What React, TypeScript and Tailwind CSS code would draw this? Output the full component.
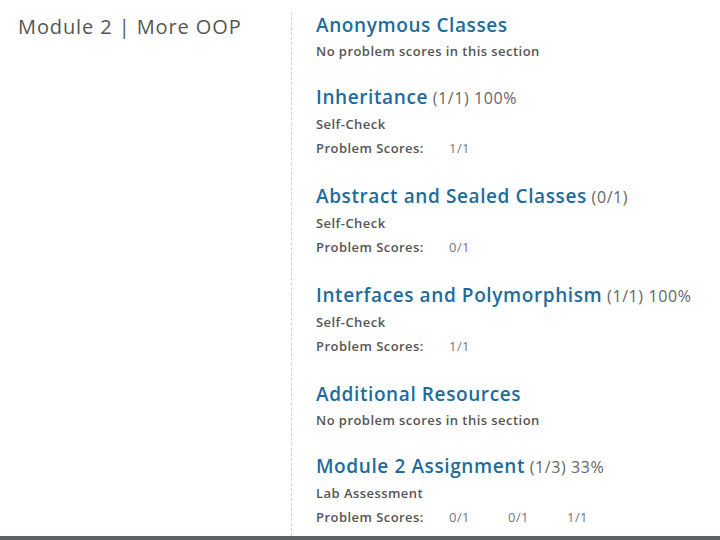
const sections: {
    title: string;
    score?: string;
    kind?: string;
    scores?: string[];
}[] = [
    { title: 'Anonymous Classes' },
    { title: 'Inheritance', score: '(1/1) 100%', kind: 'Self-Check', scores: ['1/1'] },
    { title: 'Abstract and Sealed Classes', score: '(0/1)', kind: 'Self-Check', scores: ['0/1'] },
    { title: 'Interfaces and Polymorphism', score: '(1/1) 100%', kind: 'Self-Check', scores: ['1/1'] },
    { title: 'Additional Resources' },
    { title: 'Module 2 Assignment', score: '(1/3) 33%', kind: 'Lab Assessment', scores: ['0/1', '0/1', '1/1'] },
];

export default function App() {
    return (
        <div className="w-[720px] h-[540px] bg-white flex flex-col overflow-hidden font-['Open_Sans',sans-serif]">
            <div className="flex flex-1 min-h-0">
                <div className="w-[291px] pl-[18px] pt-[13px]">
                    <h1 className="text-[20px] leading-[28px] text-[#555] tracking-[0.9px]">Module 2 | More OOP</h1>
                </div>
                <div className="mt-[12px] border-l border-dashed border-[#d0d0d0] pl-[24px] flex-1 flex flex-col">
                    <div className="-mt-[1px]">
                        {sections.map((s) => (
                            <section key={s.title} className={s.scores ? 'mb-[22px]' : 'mb-[20px]'}>
                                <h2 className="text-[19px] leading-[28px] font-semibold text-[#1d6c9d] tracking-[0.6px]">
                                    {s.title}
                                    {s.score && <span className="font-normal text-[16px] text-[#666] tracking-[0.6px]"> {s.score}</span>}
                                </h2>
                                {s.scores ? (
                                    <>
                                        <div className="text-[13px] leading-[24px] font-semibold text-[#555] tracking-[0.45px]">{s.kind}</div>
                                        <div className="flex text-[13px] leading-[24px] text-[#555] tracking-[0.45px]">
                                            <span className="font-semibold w-[133px]">Problem Scores:</span>
                                            {s.scores.map((v, i) => (
                                                <span key={i} className="w-[59px] text-[#777]">{v}</span>
                                            ))}
                                        </div>
                                    </>
                                ) : (
                                    <div className="text-[13px] leading-[24px] font-semibold text-[#555] tracking-[0.45px]">No problem scores in this section</div>
                                )}
                            </section>
                        ))}
                    </div>
                </div>
            </div>
            <div className="h-[4px] bg-[#5d6269]" />
        </div>
    );
}
